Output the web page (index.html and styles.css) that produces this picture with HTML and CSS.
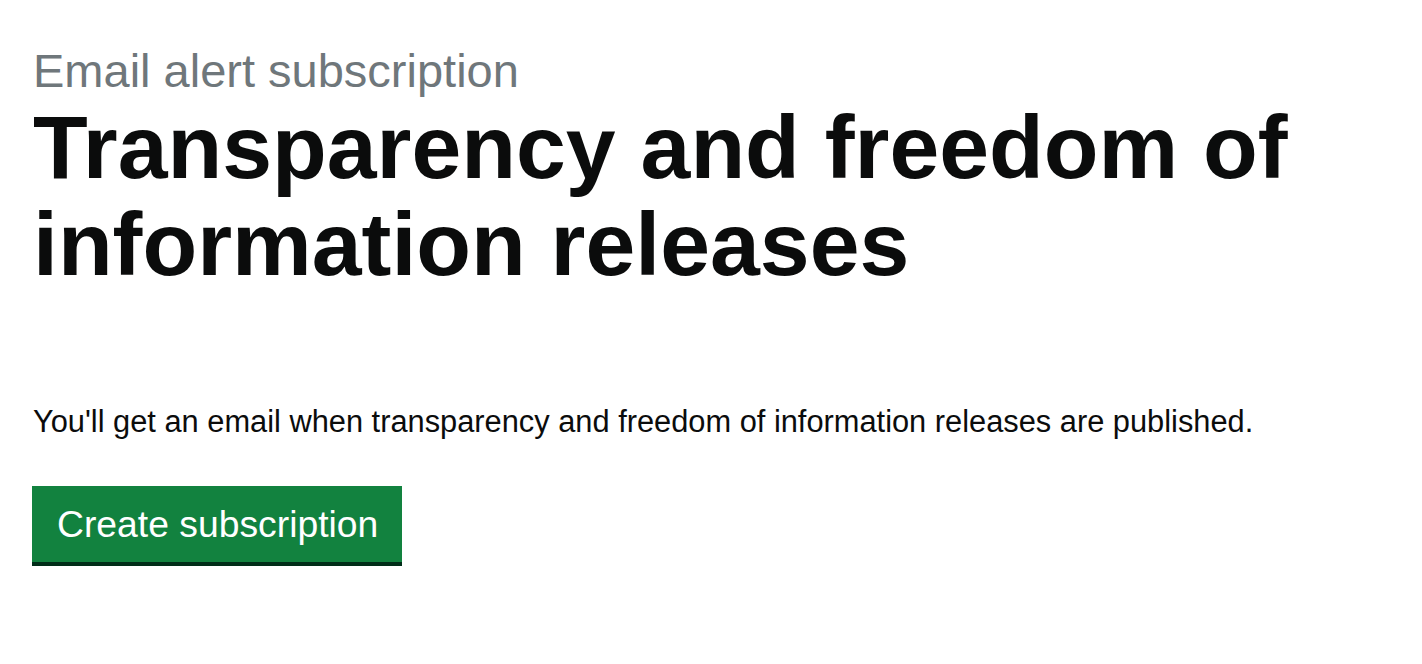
FILE: index.html
```html
<!DOCTYPE html>
<html lang="en">
<head>
<meta charset="utf-8">
<title>Transparency and freedom of information releases</title>
<link rel="stylesheet" href="styles.css">
</head>
<body>
<main class="page">
  <header class="intro">
    <span class="caption">Email alert subscription</span>
    <h1 class="title">Transparency and freedom of information releases</h1>
  </header>
  <p class="lead">You'll get an email when transparency and freedom of information releases are published.</p>
  <button class="btn" type="button">Create subscription</button>
</main>
</body>
</html>
```
FILE: styles.css
```css
html, body {
  margin: 0;
  padding: 0;
  background: #ffffff;
}
body {
  font-family: "Liberation Sans", Arial, sans-serif;
  color: #0b0c0c;
}
.page {
  padding: 43px 0 0 33px;
  display: flex;
  flex-direction: column;
  align-items: flex-start;
}
.intro {
  display: flex;
  flex-direction: column;
}
.caption {
  font-size: 47px;
  line-height: 56px;
  color: #6f777b;
}
.title {
  margin: 0;
  width: 1320px;
  font-size: 89.6px;
  line-height: 97px;
  font-weight: 700;
}
.lead {
  margin: 109px 0 0;
  font-size: 30.8px;
  line-height: 40px;
}
.btn {
  margin: 44px 0 0 -1px;
  font-family: inherit;
  font-size: 37.3px;
  line-height: 44px;
  color: #ffffff;
  background: #12823f;
  border: 0;
  border-bottom: 4px solid #002d18;
  border-radius: 0;
  padding: 16px 24px 16px 25px;
  cursor: pointer;
}
```
